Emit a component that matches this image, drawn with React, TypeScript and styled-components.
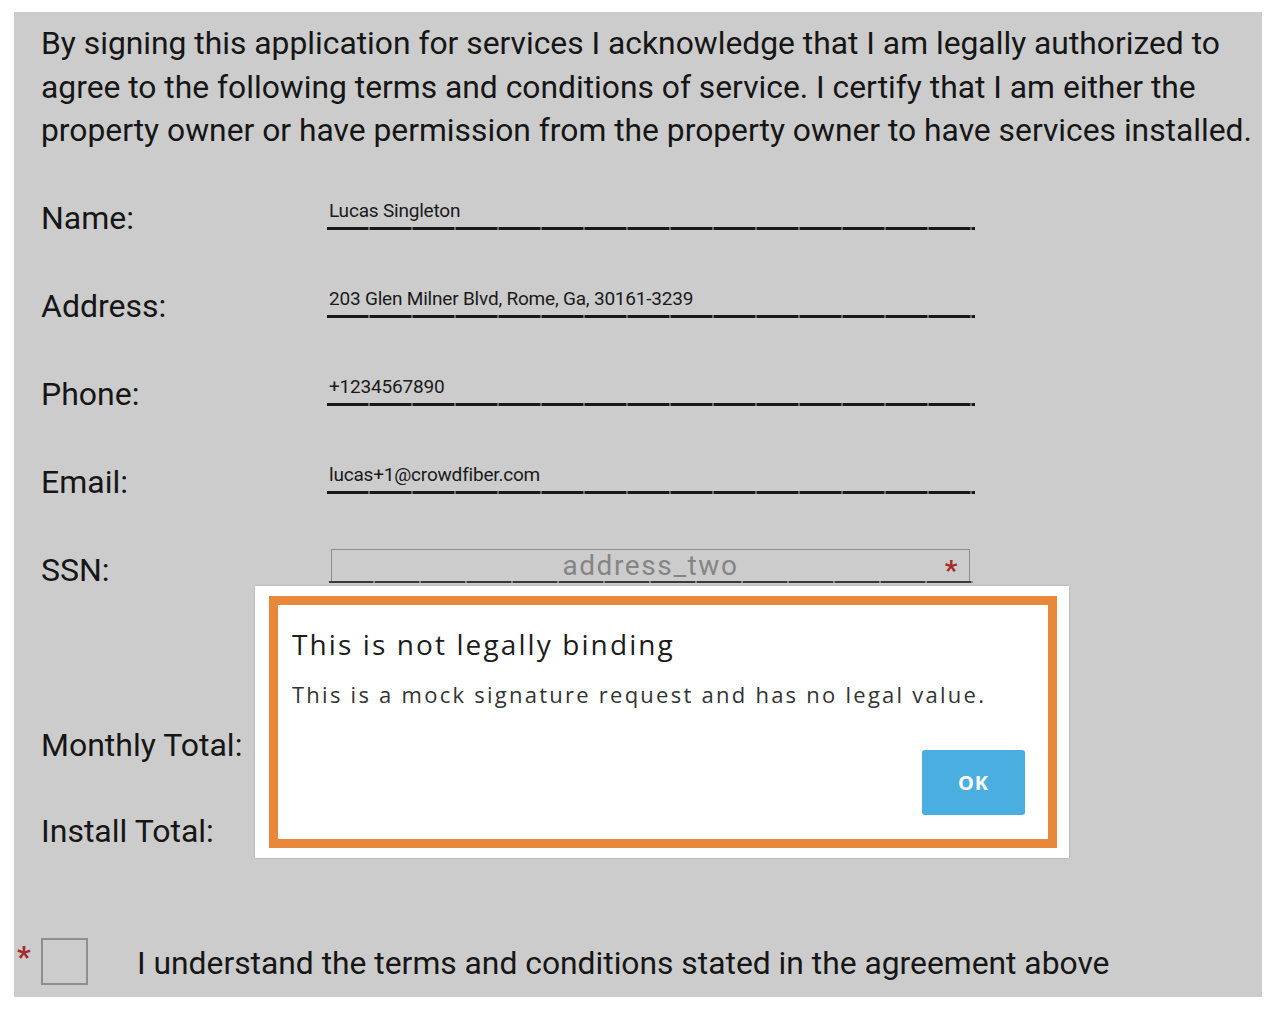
import React from "react";
import styled, { createGlobalStyle } from "styled-components";

const Global = createGlobalStyle`
  html, body { margin: 0; padding: 0; background: #ffffff; }
  body { font-family: Roboto, "Liberation Sans", sans-serif; }
  * { box-sizing: border-box; }
`;

const Page = styled.div`
  width: 1277px;
  height: 1012px;
  padding: 12px 15px 15px 14px;
`;

const Panel = styled.div`
  position: relative;
  width: 1248px;
  height: 985px;
  background: #cccccc;
  padding: 10px 0 0 27px;
  display: flex;
  flex-direction: column;
  color: #161616;
`;

const Terms = styled.p`
  margin: 0;
  font-family: Roboto, "Liberation Sans", sans-serif;
  font-size: 31.8px;
  line-height: 43.5px;
  width: 1230px;
`;

const Fields = styled.div`
  display: flex;
  flex-direction: column;
  margin-top: 21px;
`;

const Row = styled.div<{ $h?: number; $mt?: number }>`
  display: grid;
  grid-template-columns: 286px 648px;
  align-items: center;
  height: ${(p) => p.$h ?? 88}px;
  margin-top: ${(p) => p.$mt ?? 0}px;
`;

const Label = styled.div`
  font-size: 32px;
  line-height: 1;
`;

const ValueBox = styled.div`
  display: flex;
  flex-direction: column;
  margin-top: -5px;
`;

const ValueText = styled.div`
  font-size: 19px;
  line-height: 22px;
  padding-left: 2px;
  letter-spacing: -0.2px;
  color: #1a1a1a;
`;

const Underline = styled.div`
  height: 3px;
  margin-top: 5px;
  background: repeating-linear-gradient(
    90deg,
    #181818 0 41px,
    #6a6a6a 41px 43px
  );
`;

const SsnBox = styled.div`
  display: flex;
  flex-direction: column;
  margin-top: -8px;
`;

const SsnInput = styled.div`
  position: relative;
  margin: 0 5px 0 4px;
  height: 32px;
  border: 1.5px solid #8c8c8c;
  border-bottom: none;
  display: flex;
  align-items: center;
  justify-content: center;
  font-size: 28px;
  letter-spacing: 1.6px;
  color: #858585;
`;

const Required = styled.span<{ $size?: number }>`
  color: #a62b2b;
  font-size: ${(p) => p.$size ?? 28}px;
  font-weight: 700;
  line-height: 1;
`;

const SsnStar = styled(Required)`
  position: absolute;
  right: 10px;
  top: 7px;
`;

const SsnLine = styled.div`
  margin: 0 2px;
  height: 2px;
  background: repeating-linear-gradient(
    90deg,
    #3a3a3a 0 44px,
    #8a8a8a 44px 46px
  );
`;

const AgreeRow = styled.div`
  display: flex;
  align-items: center;
  margin-top: 64px;
  margin-left: -25px;
`;

const AgreeStar = styled(Required)`
  width: 25px;
  padding-left: 1px;
  align-self: flex-start;
  margin-top: 4px;
  font-size: 30px;
`;

const Checkbox = styled.div`
  width: 47px;
  height: 47px;
  border: 2px solid #8e8e8e;
  background: transparent;
  flex: none;
`;

const AgreeText = styled.div`
  font-size: 31.8px;
  margin-left: 49px;
  margin-top: 3px;
`;

const Dialog = styled.div`
  position: absolute;
  left: 241px;
  top: 574px;
  width: 814px;
  height: 272px;
  background: #ffffff;
  padding: 10px 12px 10px 14px;
  box-shadow: 0 0 2px rgba(0, 0, 0, 0.2);
`;

const DialogFrame = styled.div`
  height: 100%;
  border: 9px solid #e8883a;
  padding: 21px 14px 0 14px;
  display: flex;
  flex-direction: column;
  font-family: "Open Sans", Lato, sans-serif;
`;

const DialogTitle = styled.div`
  font-size: 28px;
  line-height: 36px;
  letter-spacing: 2.1px;
  color: #1c1c1c;
`;

const DialogBody = styled.div`
  margin-top: 18px;
  font-size: 22px;
  line-height: 28px;
  letter-spacing: 2.25px;
  color: #333333;
`;

const Actions = styled.div`
  display: flex;
  justify-content: flex-end;
  margin-top: auto;
  padding: 0 9px 24px 0;
`;

const OkButton = styled.button`
  width: 103px;
  height: 65px;
  border: none;
  border-radius: 3px;
  background: #4baee0;
  color: #ffffff;
  font-family: "Open Sans", Lato, sans-serif;
  font-weight: 700;
  font-size: 20px;
  letter-spacing: 1px;
  cursor: pointer;
`;

const fields = [
  { label: "Name:", value: "Lucas Singleton" },
  { label: "Address:", value: "203 Glen Milner Blvd, Rome, Ga, 30161-3239" },
  { label: "Phone:", value: "+1234567890" },
  { label: "Email:", value: "lucas+1@crowdfiber.com" },
];

export default function App() {
  return (
    <>
      <Global />
      <Page>
        <Panel>
          <Terms>
            By signing this application for services I acknowledge that I am legally authorized to
            agree to the following terms and conditions of service. I certify that I am either the
            property owner or have permission from the property owner to have services installed.
          </Terms>
          <Fields>
            {fields.map((f) => (
              <Row key={f.label}>
                <Label>{f.label}</Label>
                <ValueBox>
                  <ValueText>{f.value}</ValueText>
                  <Underline />
                </ValueBox>
              </Row>
            ))}
            <Row>
              <Label>SSN:</Label>
              <SsnBox>
                <SsnInput>
                  address_two
                  <SsnStar>*</SsnStar>
                </SsnInput>
                <SsnLine />
              </SsnBox>
            </Row>
            <Row $mt={88} $h={86}>
              <Label>Monthly Total:</Label>
            </Row>
            <Row $h={86}>
              <Label>Install Total:</Label>
            </Row>
          </Fields>
          <AgreeRow>
            <AgreeStar>*</AgreeStar>
            <Checkbox />
            <AgreeText>I understand the terms and conditions stated in the agreement above</AgreeText>
          </AgreeRow>
          <Dialog role="dialog">
            <DialogFrame>
              <DialogTitle>This is not legally binding</DialogTitle>
              <DialogBody>This is a mock signature request and has no legal value.</DialogBody>
              <Actions>
                <OkButton>OK</OkButton>
              </Actions>
            </DialogFrame>
          </Dialog>
        </Panel>
      </Page>
    </>
  );
}
